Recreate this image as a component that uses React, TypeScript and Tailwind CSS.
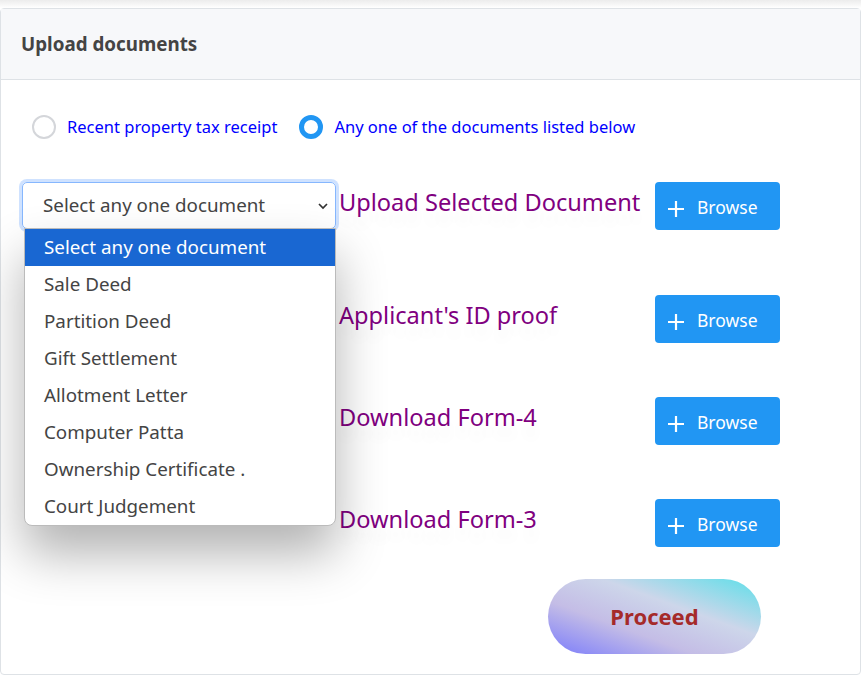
import React from 'react';

const options = [
  'Select any one document',
  'Sale Deed',
  'Partition Deed',
  'Gift Settlement',
  'Allotment Letter',
  'Computer Patta',
  'Ownership Certificate .',
  'Court Judgement',
];

const rows = [
  { label: 'Upload Selected Document', top: 'mt-0' },
  { label: "Applicant's ID proof", top: 'mt-[65px]' },
  { label: 'Download Form-4', top: 'mt-[54px]' },
  { label: 'Download Form-3', top: 'mt-[54px]' },
];

const Plus: React.FC = () => (
  <svg width="20" height="20" viewBox="0 0 20 20" className="shrink-0">
    <path d="M10 2v16M2 10h16" stroke="white" strokeWidth="2.2" />
  </svg>
);

const BrowseButton: React.FC = () => (
  <button className="flex items-center w-[125px] h-[48px] bg-[#2196f3] rounded-[4px] pl-[11px] text-white text-[17.5px]">
    <span className="mt-[6px]"><Plus /></span>
    <span className="ml-[11px] mt-[2px]">Browse</span>
  </button>
);

export default function App() {
  return (
    <div className="w-[861px] h-[687px] bg-white font-['Noto_Sans',sans-serif] relative overflow-hidden">
      <div className="h-2 bg-gradient-to-b from-[#ececec] to-white" />
      <div className="border border-[#dee2e6] rounded-[4px] w-[861px] h-[667px] bg-white">
        <div className="h-[71px] bg-[#f7f8fa] border-b border-[#dee2e6] flex items-center pl-[20px]">
          <h2 className="text-[18.8px] font-bold text-[#444]">Upload documents</h2>
        </div>

        <div className="pl-[21px] pt-[35px]">
          <div className="flex items-center h-6">
            <span className="w-6 h-6 rounded-full border-2 border-[#d4d6da] bg-white ml-[10px]" />
            <span className="ml-[11px] text-[16.5px] text-[#0000ff]">Recent property tax receipt</span>
            <span className="w-6 h-6 rounded-full border-[5px] border-[#2196f3] bg-white ml-[22px]" />
            <span className="ml-[11px] text-[16.5px] text-[#0000ff]">Any one of the documents listed below</span>
          </div>

          <div className="relative mt-[43px]">
            {rows.map((r, i) => (
              <div key={r.label} className={`flex items-start ${r.top}`}>
                <div className="w-[317px] shrink-0 h-[48px]">
                  {i === 0 && (
                    <div className="w-[314px] h-[47px] rounded-[5px] border border-[#86b7fe] shadow-[0_0_0_3px_rgba(13,110,253,0.2)] flex items-center pl-[20px] pr-[5px] text-[18.8px] text-[#444]">
                      <span className="flex-1">Select any one document</span>
                      <svg width="14" height="14" viewBox="0 0 14 14">
                        <path d="M3 5l4 4 4-4" fill="none" stroke="#333" strokeWidth="1.7" />
                      </svg>
                    </div>
                  )}
                </div>
                <div className="w-[316px] shrink-0 text-[23.6px] text-[#800080] leading-[40px] [text-shadow:0_14px_12px_rgba(0,0,0,0.04)]">
                  {r.label}
                </div>
                <BrowseButton />
              </div>
            ))}

            <ul className="absolute left-[2px] top-[46px] w-[312px] bg-white border border-[#bbb] rounded-b-[8px] shadow-[0_28px_50px_rgba(0,0,0,0.3)] overflow-hidden">
              {options.map((o, i) => (
                <li
                  key={o}
                  className={`h-[37px] flex items-center pl-[19px] text-[18.8px] ${
                    i === 0 ? 'bg-[#1967d2] text-white' : 'text-[#444]'
                  }`}
                >
                  {o}
                </li>
              ))}
            </ul>
          </div>

          <div className="flex mt-[32px] pl-[526px]">
            <button className="w-[213px] h-[75px] rounded-full bg-[linear-gradient(20deg,#7b7cfb_0%,#c4bde6_35%,#cdd6ea_62%,#5cdfe9_100%)] text-[22px] font-bold text-[#a52a2a]">
              Proceed
            </button>
          </div>
        </div>
      </div>
    </div>
  );
}
